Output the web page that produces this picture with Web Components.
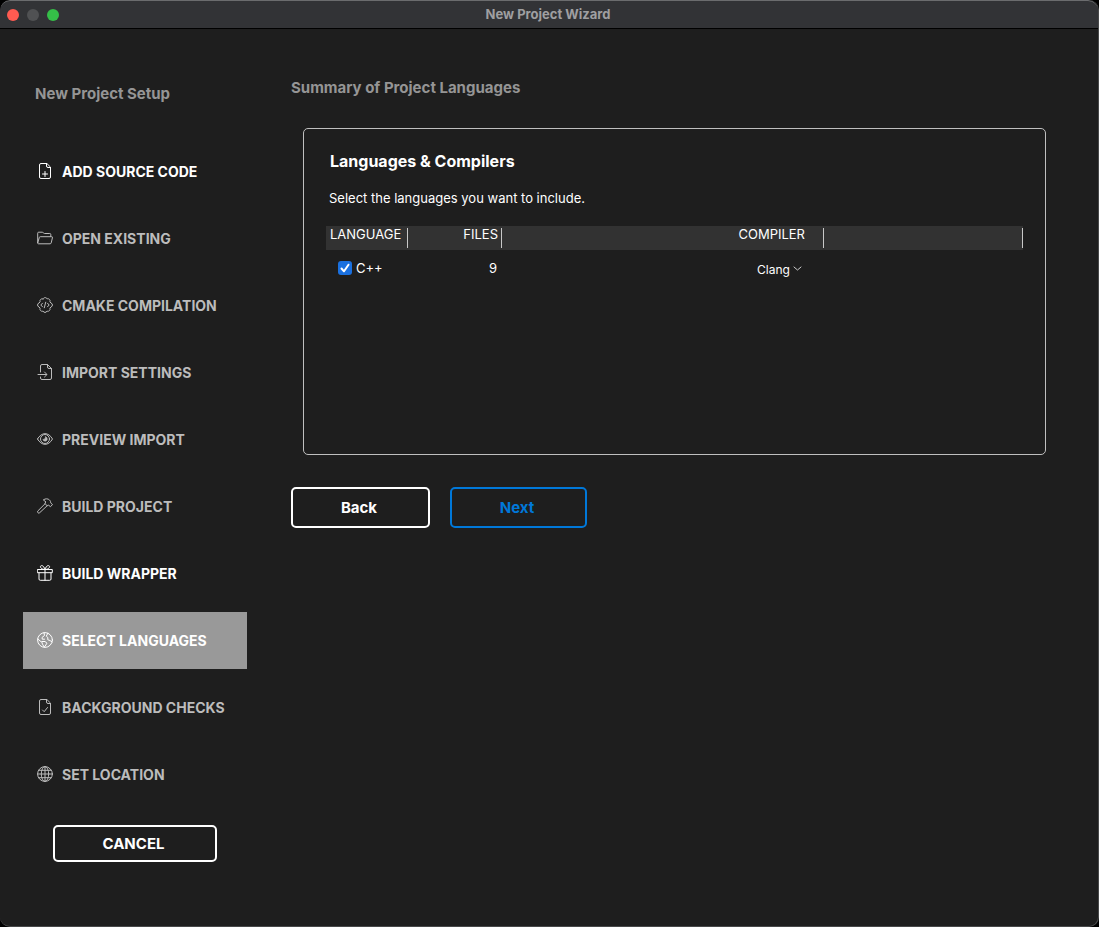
<!DOCTYPE html>
<html lang="en">
<head>
<meta charset="utf-8">
<title>New Project Wizard</title>
<style>
    body {
        margin: 0;
        background: #000;
        color: #fff;
        font-family: Inter, "Liberation Sans", sans-serif;
    }
</style>
</head>
<body>
<wizard-window caption="New Project Wizard">
    <wizard-sidebar slot="sidebar" heading="New Project Setup">
        <wizard-step icon="file-plus" done>ADD SOURCE CODE</wizard-step>
        <wizard-step icon="folder">OPEN EXISTING</wizard-step>
        <wizard-step icon="code-badge">CMAKE COMPILATION</wizard-step>
        <wizard-step icon="file-import">IMPORT SETTINGS</wizard-step>
        <wizard-step icon="eye">PREVIEW IMPORT</wizard-step>
        <wizard-step icon="hammer">BUILD PROJECT</wizard-step>
        <wizard-step icon="gift" done>BUILD WRAPPER</wizard-step>
        <wizard-step icon="earth" current>SELECT LANGUAGES</wizard-step>
        <wizard-step icon="file-check">BACKGROUND CHECKS</wizard-step>
        <wizard-step icon="globe">SET LOCATION</wizard-step>
        <wizard-button slot="footer" kind="cancel">CANCEL</wizard-button>
    </wizard-sidebar>
    <wizard-page heading="Summary of Project Languages">
        <wizard-card heading="Languages &amp; Compilers" hint="Select the languages you want to include.">
            <language-table></language-table>
        </wizard-card>
        <wizard-button slot="actions">Back</wizard-button>
        <wizard-button slot="actions" kind="primary">Next</wizard-button>
    </wizard-page>
</wizard-window>

<script>
// 16x16 outlines, stroked with the text colour
const icons = {
    "file-plus": `<path d="M9.500.5H4A1.500 1.500 0 0 0 2.500 2v12A1.500 1.500 0 0 0 4 15.500h8a1.500 1.500 0 0 0 1.500-1.500V4.500zV3A1.500 1.500 0 0 0 11 4.500h2.500M8 8.500v5M5.500 11h5"/>`,
    "folder": `<path d="M.7 12.800V3.200a1 1 0 0 1 1-1h3.600c.9 0 1.200 1.300 2.200 1.300h5.300a1 1 0 0 1 1 1v2M.7 12.800 2.300 7.500a1 1 0 0 1 1-.8h11.200a.9.900 0 0 1 .9 1.200l-1.200 5a1.200 1.200 0 0 1-1.200.9H1.500a1 1 0 0 1-.8-1"/>`,
    "code-badge": `<path d="M6 2C6.400.1 9.600.1 10 2c1.600-1.100 3.900 1.200 2.800 2.800l1.200 1.200c1.900.4 1.900 3.600 0 4l-1.200 1.200c1.100 1.600-1.200 3.900-2.800 2.800-.4 1.900-3.600 1.900-4 0-1.600 1.100-3.900-1.200-2.800-2.800L2 10C.1 9.600.1 6.400 2 6l1.200-1.200C2.100 3.200 4.400.9 6 2M5.500 6.200 3.800 8l1.700 1.800M10.500 6.200 12.200 8l-1.700 1.800M8.700 5.200l-1.400 5.600"/>`,
    "file-import": `<path d="M3.500 8V2A1.500 1.500 0 0 1 5 .5h5.500l4 4V14a1.500 1.500 0 0 1-1.500 1.500H5A1.500 1.500 0 0 1 3.500 14v-1M10.500.5V3A1.500 1.500 0 0 0 12 4.500h2.500M1 10.500h8.500M7.500 8l2.500 2.500L7.500 13"/>`,
    "eye": `<path d="M.5 8C4.500.8 11.500.8 15.500 8c-4 7.200-11 7.200-15 0z"/><circle cx="8" cy="8" r="4.500"/><path d="M8.500 5.800A2.200 2.200 0 1 1 5.900 8.200c1.300.8 2.900-.7 2.600-2.400z" fill="currentColor" stroke-width=".6"/>`,
    "hammer": `<path d="M8 4.900 9 4 6.300 1.900C8.500.4 11 .5 12.500 2c1 1 1.200 2 1.200 3l1.800 1.500-2 2.200-1.900-1.500-1.100.5zM8 5.800.9 12.900a1.100 1.100 0 0 0 1.800 1.800l7.500-7"/>`,
    "gift": `<path d="M.7 4.500h14.600v3.200H.7zM2 7.700v6.300a1.300 1.300 0 0 0 1.300 1.300h9.400A1.300 1.300 0 0 0 14 14V7.700M8 4.500v10.800M7.800 4.400C3.300 4.600 2.400.7 4.500.6c2 0 2.900 1.900 3.300 3.800zM8.200 4.400c4.500.2 5.400-3.700 3.300-3.800-2 0-2.900 1.900-3.300 3.800z"/>`,
    "earth": `<circle cx="8" cy="8" r="7.400"/><path d="M7 .8 7.500 3.500 5 5.500l.3 1.700h2.200M.8 7l3 2.500M5 9.500h3l2 1.700-2.700 4L5.700 12.500zM10.800 1.200l-1.500 3 1.500 1.300v2.300l2.200.7 2 1.500"/>`,
    "file-check": `<path d="M9.500.5H4A1.500 1.500 0 0 0 2.500 2v12A1.500 1.500 0 0 0 4 15.500h8a1.500 1.500 0 0 0 1.500-1.500V4.500zV3A1.500 1.500 0 0 0 11 4.500h2.500M5.500 11l1.700 1.700L10.500 8.500"/>`,
    "globe": `<circle cx="8" cy="8" r="7.400"/><ellipse cx="8" cy="8" rx="3.700" ry="7.400"/><path d="M8 .6v14.800M.6 8h14.800M1.700 4.300h12.600M1.700 11.700h12.600"/>`
};

class WizardWindow extends HTMLElement {
    connectedCallback() {
        this.attachShadow({mode: "open"}).innerHTML = `
<style>
    :host {
        display: flex;
        flex-direction: column;
        box-sizing: border-box;
        min-height: 100vh;
        border-right: 1px solid #48494a;
        border-bottom: 1px solid #48494a;
        border-radius: 10px;
        background: #1e1e1e;
        overflow: hidden;
    }
    header {
        display: grid;
        grid-template-columns: 1fr auto 1fr;
        align-items: center;
        box-sizing: border-box;
        height: 29px;
        padding: 0 9px 0 7px;
        border-top: 1px solid #6b6c6e;
        border-bottom: 1px solid #000;
        border-radius: 10px 10px 0 0;
        background: #323336;
    }
    .lights {
        display: flex;
        gap: 8px;
    }
    .lights i {
        width: 12px;
        height: 12px;
        border-radius: 50%;
        background: #505153;
    }
    .lights .close { background: #ff5b51; }
    .lights .zoom { background: #35bf48; }
    h1 {
        margin: 0;
        padding-bottom: 2px;
        color: #9f9fa1;
        font-size: 13px;
        line-height: 16px;
    }
    .body {
        display: flex;
        flex: 1;
        gap: 44px;
        padding: 0 52px 0 23px;
    }
</style>
<header>
    <div class="lights"><i class="close"></i><i></i><i class="zoom"></i></div>
    <h1>${this.getAttribute("caption")}</h1>
</header>
<div class="body">
    <slot name="sidebar"></slot>
    <slot></slot>
</div>`;
    }
}

class WizardSidebar extends HTMLElement {
    connectedCallback() {
        this.attachShadow({mode: "open"}).innerHTML = `
<style>
    :host {
        display: block;
        flex: none;
        width: 224px;
        padding-top: 55px;
    }
    h2 {
        margin: 0 12px 39px;
        color: #959595;
        font-size: 15px;
        line-height: 20px;
    }
    nav {
        display: flex;
        flex-direction: column;
        gap: 10px;
    }
    footer {
        display: flex;
        justify-content: center;
        padding: 22px 0;
    }
</style>
<h2>${this.getAttribute("heading")}</h2>
<nav><slot></slot></nav>
<footer><slot name="footer"></slot></footer>`;
    }
}

class WizardStep extends HTMLElement {
    connectedCallback() {
        this.attachShadow({mode: "open"}).innerHTML = `
<style>
    :host {
        display: block;
        color: #bcbcbc;
    }
    :host([done]) { color: #fff; }
    :host([current]) {
        color: #fff;
        background: #999;
    }
    a {
        display: flex;
        align-items: center;
        gap: 9px;
        height: 57px;
        padding: 0 14px;
        color: inherit;
        font-size: 14px;
        font-weight: 700;
        line-height: 18px;
        text-decoration: none;
        white-space: nowrap;
    }
    svg {
        flex: none;
        margin-bottom: 2px;
        fill: none;
        stroke: currentColor;
        stroke-linecap: round;
        stroke-linejoin: round;
    }
</style>
<a href="#"><svg width="16" height="16" viewBox="0 0 16 16">${icons[this.getAttribute("icon")]}</svg><slot></slot></a>`;
    }
}

class WizardButton extends HTMLElement {
    connectedCallback() {
        this.attachShadow({mode: "open"}).innerHTML = `
<style>
    :host {
        display: block;
    }
    button {
        display: block;
        box-sizing: border-box;
        width: 139px;
        height: 41px;
        padding: 0 3px 0 0;
        border: 2px solid;
        border-radius: 5px;
        background: none;
        color: #fff;
        font: 700 15px/20px Inter, "Liberation Sans", sans-serif;
    }
    :host([kind=primary]) button {
        width: 137px;
        color: #0078d9;
    }
    :host([kind=cancel]) button {
        width: 164px;
        height: 37px;
    }
</style>
<button type="button"><slot></slot></button>`;
    }
}

class WizardPage extends HTMLElement {
    connectedCallback() {
        this.attachShadow({mode: "open"}).innerHTML = `
<style>
    :host {
        display: block;
        flex: 1;
        min-width: 0;
        padding-top: 49px;
    }
    h2 {
        margin: 0 0 30px;
        color: #959595;
        font-size: 15px;
        line-height: 20px;
    }
    .actions {
        display: flex;
        gap: 20px;
        margin-top: 32px;
    }
</style>
<h2>${this.getAttribute("heading")}</h2>
<slot></slot>
<div class="actions"><slot name="actions"></slot></div>`;
    }
}

class WizardCard extends HTMLElement {
    connectedCallback() {
        this.attachShadow({mode: "open"}).innerHTML = `
<style>
    :host {
        display: block;
        box-sizing: border-box;
        min-height: 327px;
        margin-left: 12px;
        padding: 22px;
        border: 1px solid #bfbfbf;
        border-radius: 5px;
    }
    h3 {
        margin: 0 4px 18px;
        font-size: 16px;
        line-height: 20px;
    }
    p {
        margin: 0 3px 19px;
        font-size: 13px;
        line-height: 18px;
    }
</style>
<h3>${this.getAttribute("heading").replace("&", "&amp;")}</h3>
<p>${this.getAttribute("hint")}</p>
<slot></slot>`;
    }
}

class LanguageTable extends HTMLElement {
    connectedCallback() {
        this.attachShadow({mode: "open"}).innerHTML = `
<style>
    :host {
        display: block;
    }
    table {
        width: 100%;
        border-collapse: collapse;
        table-layout: fixed;
        font-size: 13px;
        line-height: 16px;
    }
    .lang { width: 82px; }
    .files { width: 94px; }
    .compiler { width: 322px; }
    th {
        padding: 2px 0;
        background: #323232;
        font-weight: 400;
        text-align: right;
    }
    th div {
        box-sizing: border-box;
        height: 20px;
        padding: 0 3px;
        border-right: 1px solid #c8c8c8;
        line-height: 12px;
    }
    th:first-child { text-align: left; }
    th:first-child div { padding-left: 4px; }
    th:nth-child(3) div { padding-right: 18px; }
    td {
        height: 36px;
        padding: 0;
        text-align: right;
    }
    label {
        display: flex;
        align-items: center;
        gap: 4px;
        padding-left: 12px;
    }
    .tick {
        display: grid;
    }
    .tick > * { grid-area: 1 / 1; }
    input {
        width: 14px;
        height: 14px;
        margin: 0;
        border-radius: 3px;
        background: #1a70df;
        appearance: none;
    }
    svg {
        fill: none;
        stroke: #fff;
        stroke-linecap: round;
        stroke-linejoin: round;
        pointer-events: none;
    }
    input:not(:checked) + svg { display: none; }
    .count { padding-right: 5px; }
    .pick {
        display: flex;
        justify-content: flex-end;
        align-items: center;
        gap: 3px;
        padding: 4px 22px 0 0;
    }
    select {
        padding: 0;
        border: 0;
        background: none;
        color: #fff;
        font: 400 12px/16px Inter, "Liberation Sans", sans-serif;
        appearance: none;
    }
    .pick svg {
        margin-bottom: 4px;
        stroke: #ccc;
    }
</style>
<table>
    <colgroup><col class="lang"><col class="files"><col class="compiler"><col></colgroup>
    <thead>
        <tr>
            <th><div>LANGUAGE</div></th>
            <th><div>FILES</div></th>
            <th><div>COMPILER</div></th>
            <th><div></div></th>
        </tr>
    </thead>
    <tbody>
        <tr>
            <td>
                <label>
                    <span class="tick">
                        <input type="checkbox" checked>
                        <svg width="14" height="14" viewBox="0 0 14 14" stroke-width="2"><path d="M3.500 7.500 6 10.300 10.500 3.700"/></svg>
                    </span>C++
                </label>
            </td>
            <td class="count">9</td>
            <td>
                <div class="pick">
                    <select aria-label="Compiler for C++"><option>Clang</option></select>
                    <svg width="9" height="5" viewBox="0 0 9 5"><path d="M1 1l3.500 3L8 1"/></svg>
                </div>
            </td>
            <td></td>
        </tr>
    </tbody>
</table>`;
    }
}

customElements.define("wizard-window", WizardWindow);
customElements.define("wizard-sidebar", WizardSidebar);
customElements.define("wizard-step", WizardStep);
customElements.define("wizard-button", WizardButton);
customElements.define("wizard-page", WizardPage);
customElements.define("wizard-card", WizardCard);
customElements.define("language-table", LanguageTable);
</script>
</body>
</html>
